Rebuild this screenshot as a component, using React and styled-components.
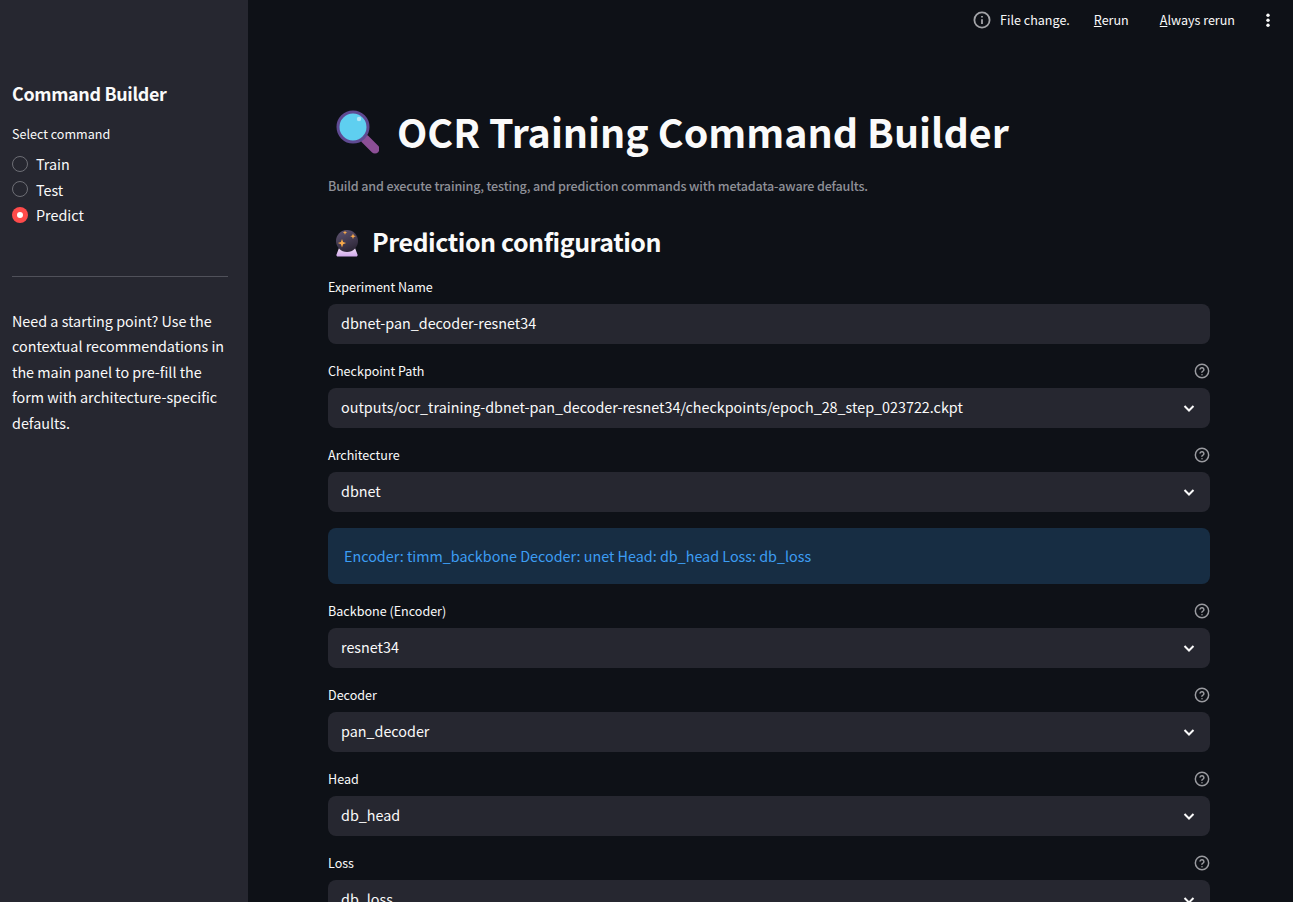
import { createGlobalStyle, styled } from 'styled-components';

const Global = createGlobalStyle`
    * { box-sizing: border-box; }
    html, body { margin: 0; height: 100%; overflow: hidden; }
    body {
        background: #0e1117;
        color: #fafafa;
        font-family: "Noto Sans CJK SC", "Noto Sans", sans-serif;
    }
`;

const Shell = styled.div`
    display: flex;
    height: 902px;
    overflow: hidden;
`;

const Sidebar = styled.aside`
    width: 248px;
    flex: none;
    background: #262730;
    padding: 79px 20px 0 12px;
`;

const SideTitle = styled.h2`
    margin: 0;
    font-size: 17.9px;
    line-height: 28px;
    font-weight: 700;
    letter-spacing: -0.33px;
`;

const RadioLabel = styled.div`
    margin-top: 17px;
    font-size: 12.55px;
    line-height: 20px;
`;

const RadioList = styled.div`
    display: flex;
    flex-direction: column;
    margin-top: 7px;
`;

const RadioRow = styled.div`
    display: flex;
    align-items: center;
    gap: 8px;
    height: 25.5px;
    font-size: 14.35px;
`;

const RadioDot = styled.span`
    width: 16px;
    height: 16px;
    border-radius: 50%;
    display: flex;
    align-items: center;
    justify-content: center;
    background: ${(p) => (p.$on ? '#ff4b4b' : 'transparent')};
    border: ${(p) => (p.$on ? 'none' : '1px solid #6d6e75')};
    &::after {
        content: '';
        display: ${(p) => (p.$on ? 'block' : 'none')};
        width: 6px;
        height: 6px;
        border-radius: 50%;
        background: #fff;
    }
`;

const Rule = styled.hr`
    margin: 48px 0 31px;
    border: 0;
    border-top: 1px solid #50515a;
`;

const SideNote = styled.p`
    margin: 0;
    font-size: 14.35px;
    line-height: 25.6px;
`;

const Main = styled.main`
    flex: 1;
    min-width: 0;
    display: flex;
    flex-direction: column;
`;

const TopBar = styled.div`
    height: 40px;
    flex: none;
    display: flex;
    align-items: center;
    justify-content: flex-end;
    font-size: 12.55px;
    line-height: 18px;
    padding-right: 17px;
`;

const Status = styled.span`
    display: flex;
    align-items: center;
    gap: 9px;
    margin-right: 24px;
`;

const TopAction = styled.span`
    margin-right: ${(p) => p.$after}px;
    &::first-letter { text-decoration: underline; }
`;

const Content = styled.div`
    width: 882px;
    margin-left: 80px;
    padding-top: 60px;
`;

const Title = styled.h1`
    margin: 0;
    display: flex;
    align-items: center;
    gap: 18px;
    font-size: 39.4px;
    line-height: 62px;
    font-weight: 700;
    padding-left: 5px;
    svg { margin-top: 4px; }
`;

const Lead = styled.p`
    margin: 14px 0 0;
    font-size: 12.55px;
    font-weight: 500;
    line-height: 20px;
    letter-spacing: -0.16px;
    color: #8e9097;
`;

const Section = styled.h2`
    margin: 25px 0 0;
    display: flex;
    align-items: center;
    gap: 12px;
    font-size: 25px;
    line-height: 40px;
    font-weight: 700;
    letter-spacing: -0.45px;
    padding-left: 4px;
    svg { margin-top: 2px; }
`;

const Form = styled.div`
    display: flex;
    flex-direction: column;
    gap: 16px;
    margin-top: 15px;
`;

const Field = styled.div`
    display: flex;
    flex-direction: column;
`;

const LabelRow = styled.div`
    display: flex;
    align-items: center;
    justify-content: space-between;
    height: 28px;
    padding-bottom: 8px;
    font-size: 12.55px;
`;

const Help = styled.svg`
    width: 16px;
    height: 16px;
    margin-top: 2px;
    color: #9a9ba0;
`;

const Control = styled.div`
    height: 40px;
    display: flex;
    align-items: center;
    justify-content: space-between;
    padding: 0 13px 0 13px;
    background: #262730;
    border-radius: 8px;
    font-size: 14.35px;
`;

const ControlText = styled.span`
    margin-top: -3px;
`;

const Info = styled.div`
    height: 56px;
    margin-top: 16px;
    display: flex;
    align-items: center;
    padding: 0 16px 2px;
    border-radius: 8px;
    background: #172d43;
    color: #3d9df3;
    font-size: 14.35px;
`;

const HelpIcon = () => (
    <Help viewBox="0 0 24 24" fill="none" stroke="currentColor" strokeWidth="2.200" strokeLinecap="round">
        <circle cx="12" cy="12" r="10" />
        <path d="M9.1 9a3 3 0 0 1 5.8 1c0 2-3 2.6-3 4" />
        <path d="M12 17.5h.01" />
    </Help>
);

const Chevron = () => (
    <svg width="16" height="16" viewBox="0 0 16 16" fill="none" stroke="#fafafa" strokeWidth="2">
        <path d="M3.5 6l4.5 4.5L12.500 6" />
    </svg>
);

const InfoIcon = () => (
    <svg width="18" height="18" viewBox="0 0 18 18" fill="none" stroke="#a3a4a8" strokeWidth="1.800">
        <circle cx="9" cy="9" r="7.600" />
        <path d="M9 8.200v4.800M9 5v1.500" />
    </svg>
);

const Kebab = () => (
    <svg width="16" height="16" viewBox="0 0 16 16" fill="#fafafa">
        <circle cx="8" cy="3.300" r="1.700" />
        <circle cx="8" cy="8.300" r="1.700" />
        <circle cx="8" cy="13.300" r="1.700" />
    </svg>
);

const MagnifierEmoji = () => (
    <svg width="46" height="46" viewBox="0 0 46 46">
        <path d="M32 29l10 10" stroke="#8c4f96" strokeWidth="9" strokeLinecap="round" />
        <circle cx="20" cy="17" r="15" fill="#5fcff0" stroke="#5f4a92" strokeWidth="3" />
        <circle cx="26" cy="9" r="2.200" fill="#b4e6f6" />
    </svg>
);

const BallEmoji = () => (
    <svg width="28" height="36" viewBox="0 0 28 36">
        <defs>
            <linearGradient id="globe" x1="0.2" y1="0" x2="0.6" y2="1">
                <stop offset="0" stopColor="#5d5370" />
                <stop offset="1" stopColor="#2b2535" />
            </linearGradient>
            <linearGradient id="stand" x1="0" y1="0" x2="0" y2="1">
                <stop offset="0" stopColor="#f1def6" />
                <stop offset="1" stopColor="#cfa8ea" />
            </linearGradient>
        </defs>
        <path d="M7 24h16l2.500 6.500a1.500 1.500 0 0 1-1.500 2H6a1.500 1.500 0 0 1-1.500-2z" fill="url(#stand)" />
        <circle cx="15" cy="17" r="11" fill="url(#globe)" />
        <path d="M10 15l1.100 3 3 1.100-3 1.100L10 23.500l-1.100-3.300-3-1.100 3-1.100z" fill="#f8a94a" />
        <path d="M21 9.500l.8 2 2 .8-2 .8-.8 2-.8-2-2-.8 2-.8z" fill="#f8a94a" />
        <path d="M13 6.500l.6 1.500 1.500.6-1.500.6-.6 1.500-.6-1.500-1.500-.6 1.500-.6z" fill="#f8a94a" />
    </svg>
);

const fields = [
    { label: 'Checkpoint Path', value: 'outputs/ocr_training-dbnet-pan_decoder-resnet34/checkpoints/epoch_28_step_023722.ckpt' },
    { label: 'Architecture', value: 'dbnet', info: 'Encoder: timm_backbone Decoder: unet Head: db_head Loss: db_loss' },
    { label: 'Backbone (Encoder)', value: 'resnet34' },
    { label: 'Decoder', value: 'pan_decoder' },
    { label: 'Head', value: 'db_head' },
    { label: 'Loss', value: 'db_loss' },
];

const commands = ['Train', 'Test', 'Predict'];

export default function App() {
    return (
        <Shell>
            <Global />
            <Sidebar>
                <SideTitle>Command Builder</SideTitle>
                <RadioLabel>Select command</RadioLabel>
                <RadioList>
                    {commands.map((name) => (
                        <RadioRow key={name}>
                            <RadioDot $on={name === 'Predict'} />
                            {name}
                        </RadioRow>
                    ))}
                </RadioList>
                <Rule />
                <SideNote>
                    Need a starting point? Use the contextual recommendations in the main panel to pre-fill the form
                    with architecture-specific defaults.
                </SideNote>
            </Sidebar>
            <Main>
                <TopBar>
                    <Status><InfoIcon />File change.</Status>
                    <TopAction $after={31}>Rerun</TopAction>
                    <TopAction $after={25}>Always rerun</TopAction>
                    <Kebab />
                </TopBar>
                <Content>
                    <Title><MagnifierEmoji />OCR Training Command Builder</Title>
                    <Lead>Build and execute training, testing, and prediction commands with metadata-aware defaults.</Lead>
                    <Section><BallEmoji />Prediction configuration</Section>
                    <Form>
                        <Field>
                            <LabelRow>Experiment Name</LabelRow>
                            <Control><ControlText>dbnet-pan_decoder-resnet34</ControlText></Control>
                        </Field>
                        {fields.map((f) => (
                            <Field key={f.label}>
                                <LabelRow>{f.label}<HelpIcon /></LabelRow>
                                <Control><ControlText>{f.value}</ControlText><Chevron /></Control>
                                {f.info && <Info>{f.info}</Info>}
                            </Field>
                        ))}
                    </Form>
                </Content>
            </Main>
        </Shell>
    );
}
